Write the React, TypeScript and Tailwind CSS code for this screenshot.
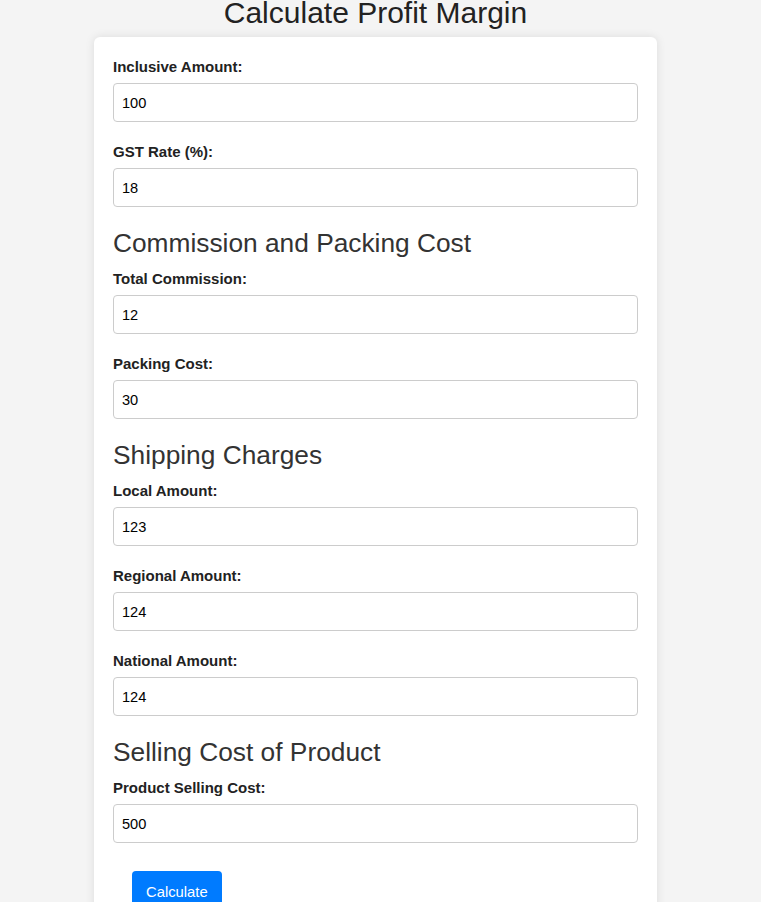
import React from "react";

const font = { fontFamily: '"Liberation Sans", Arial, sans-serif' };

function Field({ label, value }: { label: string; value: string }) {
  return (
    <div className="mb-[21px]">
      <label className="block text-[15px] font-bold leading-[17px] text-[#222] mb-2">{label}</label>
      <input
        defaultValue={value}
        className="block w-full h-[39px] border border-[#ccc] rounded-[4px] px-2 text-[14.6px] text-black bg-white outline-none"
        style={font}
      />
    </div>
  );
}

function Heading({ children }: { children: React.ReactNode }) {
  return <h2 className="text-[26.3px] leading-[30px] text-[#333] mb-3 font-normal">{children}</h2>;
}

export default function App() {
  return (
    <div className="w-[761px] h-[902px] overflow-hidden bg-[#f4f4f4]" style={font}>
      <div className="w-[751px] flex flex-col">
        <h1 className="text-center text-[30px] leading-[26px] mb-[11px] text-[#222] font-normal">
          Calculate Profit Margin
        </h1>
        <div className="ml-[94px] w-[563px] bg-white rounded-[6px] shadow-[0_0_10px_rgba(0,0,0,0.1)] pt-[21px] px-[19px] pb-5">
          <Field label="Inclusive Amount:" value="100" />
          <Field label="GST Rate (%):" value="18" />
          <Heading>Commission and Packing Cost</Heading>
          <Field label="Total Commission:" value="12" />
          <Field label="Packing Cost:" value="30" />
          <Heading>Shipping Charges</Heading>
          <Field label="Local Amount:" value="123" />
          <Field label="Regional Amount:" value="124" />
          <Field label="National Amount:" value="124" />
          <Heading>Selling Cost of Product</Heading>
          <Field label="Product Selling Cost:" value="500" />
          <button className="ml-[19px] mt-[7px] bg-[#007bff] text-white rounded-[4px] px-[14px] pt-[13px] pb-[10px] text-[14.8px] leading-[17px]">
            Calculate
          </button>
        </div>
      </div>
    </div>
  );
}
